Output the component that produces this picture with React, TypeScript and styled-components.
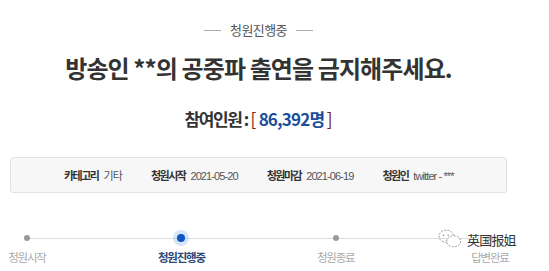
import styled, { createGlobalStyle } from "styled-components";

const Global = createGlobalStyle`
  html, body {
    margin: 0;
    padding: 0;
    background: #fff;
  }
  body {
    font-family: "Noto Sans CJK KR", "Noto Sans", sans-serif;
    color: #333;
  }
`;

const Page = styled.div`
  width: 497px;
  margin-left: 10px;
  padding-top: 20px;
  position: relative;
`;

const Status = styled.div`
  display: flex;
  align-items: center;
  justify-content: center;
  gap: 9px;
  font-size: 13px;
  letter-spacing: -0.6px;
  color: #555;
  line-height: 20px;

  &::before,
  &::after {
    content: "";
    width: 17px;
    height: 1px;
    background: #aaa;
  }
`;

const Title = styled.h1`
  margin: 11px 0 0;
  text-align: center;
  font-size: 24px;
  font-weight: 700;
  letter-spacing: -0.9px;
  line-height: 34px;
  color: #333;
`;

const Count = styled.div`
  margin-top: 21px;
  text-align: center;
  font-size: 17px;
  font-weight: 700;
  line-height: 26px;
  letter-spacing: -1.4px;
  color: #333;
`;

const Bracket = styled.span`
  color: #7a2020;
  font-weight: 400;
  letter-spacing: 0;
`;

const Num = styled.span`
  color: #1c4f9a;
  letter-spacing: -0.8px;
`;

const InfoBox = styled.div`
  margin-top: 25px;
  height: 34px;
  border: 1px solid #e2e2e2;
  border-radius: 3px;
  background: #f7f7f7;
  display: flex;
  align-items: center;
  padding-left: 53px;
  gap: 29px;
`;

const Info = styled.div`
  display: flex;
  align-items: baseline;
  gap: 5px;
  white-space: nowrap;
`;

const Label = styled.span`
  font-size: 11px;
  letter-spacing: -1.5px;
  font-weight: 700;
  color: #333;
`;

const Value = styled.span`
  font-family: "Liberation Sans", "Noto Sans CJK KR", sans-serif;
  font-size: 11px;
  letter-spacing: -0.9px;
  color: #555;
`;

const Steps = styled.div`
  margin-top: 35px;
  display: flex;
  justify-content: space-between;
  position: relative;

  &::before {
    content: "";
    position: absolute;
    left: 17px;
    right: 17px;
    top: 10px;
    height: 1px;
    background: #ddd;
  }
`;

const Step = styled.div`
  width: 34px;
  display: flex;
  flex-direction: column;
  align-items: center;
  position: relative;
`;

const Dot = styled.span<{ $active?: boolean }>`
  width: ${(p) => (p.$active ? 8 : 6)}px;
  height: ${(p) => (p.$active ? 8 : 6)}px;
  margin-top: ${(p) => (p.$active ? 6 : 7)}px;
  margin-bottom: ${(p) => (p.$active ? 0 : 1)}px;
  border-radius: 50%;
  background: ${(p) => (p.$active ? "#0d55c2" : "#999")};
  box-shadow: ${(p) => (p.$active ? "0 0 0 4px rgba(90,150,245,0.25)" : "none")};
`;

const StepLabel = styled.span<{ $active?: boolean }>`
  margin-top: 7px;
  font-size: 11.5px;
  letter-spacing: -1.2px;
  white-space: nowrap;
  font-weight: ${(p) => (p.$active ? 700 : 400)};
  color: ${(p) => (p.$active ? "#2a4a78" : "#aaa")};
`;

const Watermark = styled.div`
  position: absolute;
  left: 428px;
  bottom: 15px;
  display: flex;
  align-items: center;
  gap: 5px;
  white-space: nowrap;
  font-family: "Noto Sans CJK SC", sans-serif;
  font-size: 13px;
  letter-spacing: -0.8px;
  color: #333;
  text-shadow: 0 0 2px #fff, 0 0 2px #fff;
`;

const steps = [
  { label: "청원시작" },
  { label: "청원진행중", active: true },
  { label: "청원종료" },
  { label: "답변완료" },
];

export default function App() {
  return (
    <>
      <Global />
      <Page>
        <Status>청원진행중</Status>
        <Title>방송인 **의 공중파 출연을 금지해주세요.</Title>
        <Count>
          참여인원 : <Bracket>[</Bracket> <Num>86,392명</Num> <Bracket>]</Bracket>
        </Count>
        <InfoBox>
          <Info>
            <Label>카테고리</Label>
            <Value>기타</Value>
          </Info>
          <Info>
            <Label>청원시작</Label>
            <Value>2021-05-20</Value>
          </Info>
          <Info>
            <Label>청원마감</Label>
            <Value>2021-06-19</Value>
          </Info>
          <Info>
            <Label>청원인</Label>
            <Value>twitter - ***</Value>
          </Info>
        </InfoBox>
        <Steps>
          {steps.map((s) => (
            <Step key={s.label}>
              <Dot $active={s.active} />
              <StepLabel $active={s.active}>{s.label}</StepLabel>
            </Step>
          ))}
        </Steps>
        <Watermark>
          <svg width="24" height="22" viewBox="0 0 26 22" fill="none" stroke="#888" strokeWidth="1" strokeDasharray="2 1.5">
            <ellipse cx="9" cy="8" rx="8" ry="6.5" />
            <ellipse cx="17" cy="13.5" rx="7.5" ry="6" fill="#fff" />
            <circle cx="6" cy="7" r="0.8" fill="#888" stroke="none" />
            <circle cx="11" cy="7" r="0.8" fill="#888" stroke="none" />
          </svg>
          英国报姐
        </Watermark>
      </Page>
    </>
  );
}
